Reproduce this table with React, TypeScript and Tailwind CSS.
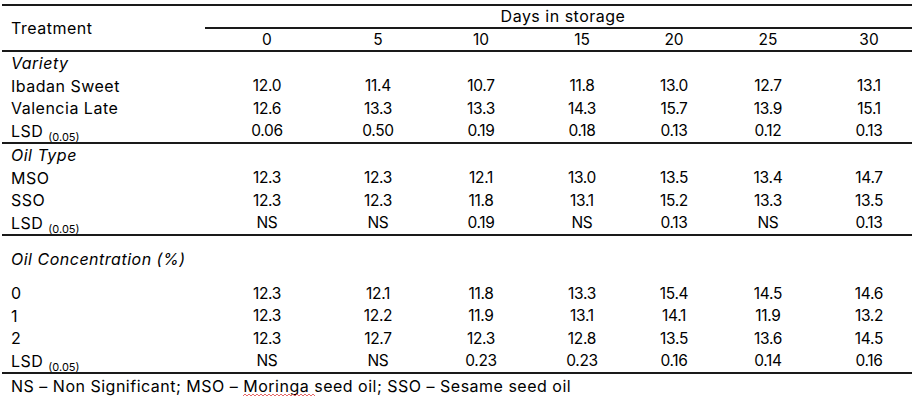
const cols = "grid grid-cols-[203px_124px_98px_108px_94px_90px_98px_104px]";

type Row = { label: React.ReactNode; values?: string[]; italic?: boolean; tall?: boolean };

const lsd = (
  <span>
    LSD <span className="relative top-[4px] text-[11px] tracking-normal">(0.05)</span>
  </span>
);

const variety: Row[] = [
  { label: "Variety", italic: true },
  { label: "Ibadan Sweet", values: ["12.0", "11.4", "10.7", "11.8", "13.0", "12.7", "13.1"] },
  { label: "Valencia Late", values: ["12.6", "13.3", "13.3", "14.3", "15.7", "13.9", "15.1"] },
  { label: lsd, values: ["0.06", "0.50", "0.19", "0.18", "0.13", "0.12", "0.13"] },
];

const oilType: Row[] = [
  { label: "Oil Type", italic: true },
  { label: "MSO", values: ["12.3", "12.3", "12.1", "13.0", "13.5", "13.4", "14.7"] },
  { label: "SSO", values: ["12.3", "12.3", "11.8", "13.1", "15.2", "13.3", "13.5"] },
  { label: lsd, values: ["NS", "NS", "0.19", "NS", "0.13", "NS", "0.13"] },
];

const oilConc: Row[] = [
  { label: "Oil Concentration (%)", italic: true, tall: true },
  { label: "0", values: ["12.3", "12.1", "11.8", "13.3", "15.4", "14.5", "14.6"] },
  { label: "1", values: ["12.3", "12.2", "11.9", "13.1", "14.1", "11.9", "13.2"] },
  { label: "2", values: ["12.3", "12.7", "12.3", "12.8", "13.5", "13.6", "14.5"] },
  { label: lsd, values: ["NS", "NS", "0.23", "0.23", "0.16", "0.14", "0.16"] },
];

function TableRow({ row }: { row: Row }) {
  return (
    <div className={`${cols} ${row.tall ? "h-[46px]" : "h-[22.5px]"} items-center`}>
      <div className={`pl-[9px] text-[16px] tracking-[0.5px] whitespace-nowrap ${row.italic ? "italic" : ""}`}>
        {row.label}
      </div>
      {(row.values ?? []).map((v, i) => (
        <div key={i} className="text-center text-[15.5px] tracking-[-0.3px]">
          {v}
        </div>
      ))}
    </div>
  );
}

function Section({ rows }: { rows: Row[] }) {
  return (
    <div className="border-b-2 border-[#1a1a1a]">
      {rows.map((r, i) => (
        <TableRow key={i} row={r} />
      ))}
    </div>
  );
}

export default function App() {
  return (
    <div
      className="w-[912px] h-[402px] bg-white text-black overflow-hidden pt-[4px]"
      style={{ fontFamily: 'Inter, "Open Sans", sans-serif' }}
    >
      <div className="ml-[2px] w-[910px] leading-none">
        {/* header */}
        <div className="border-t-2 border-b-2 border-[#1a1a1a]">
          <div className="flex">
            <div className="w-[203px] shrink-0 flex items-center pl-[9px] text-[16px] tracking-[0.5px]">Treatment</div>
            <div className="flex-1">
              <div className="h-[23px] flex items-center justify-center border-b-2 border-[#1a1a1a] text-[16px] tracking-[0.5px] pb-[2px]">
                Days in storage
              </div>
              <div className="grid grid-cols-[124px_98px_108px_94px_90px_98px_104px] h-[21px] items-center">
                {["0", "5", "10", "15", "20", "25", "30"].map((d) => (
                  <div key={d} className="text-center text-[15.5px]">
                    {d}
                  </div>
                ))}
              </div>
            </div>
          </div>
        </div>

        <Section rows={variety} />
        <Section rows={oilType} />
        <Section rows={oilConc} />

        <div className="h-[23px] flex items-center pl-[9px] text-[16px] tracking-[0.5px] whitespace-nowrap">
          NS – Non Significant; MSO –
          <span className="relative mx-[5px]">
            Moringa
            <svg className="absolute left-0 top-[15px]" width="72" height="4" viewBox="0 0 72 4">
              <path
                d="M0 3 L2 1 L4 3 L6 1 L8 3 L10 1 L12 3 L14 1 L16 3 L18 1 L20 3 L22 1 L24 3 L26 1 L28 3 L30 1 L32 3 L34 1 L36 3 L38 1 L40 3 L42 1 L44 3 L46 1 L48 3 L50 1 L52 3 L54 1 L56 3 L58 1 L60 3 L62 1 L64 3 L66 1 L68 3 L70 1 L72 3"
                fill="none"
                stroke="#e04040"
                strokeWidth="0.8"
              />
            </svg>
          </span>
          seed oil; SSO – Sesame seed oil
        </div>
      </div>
    </div>
  );
}
